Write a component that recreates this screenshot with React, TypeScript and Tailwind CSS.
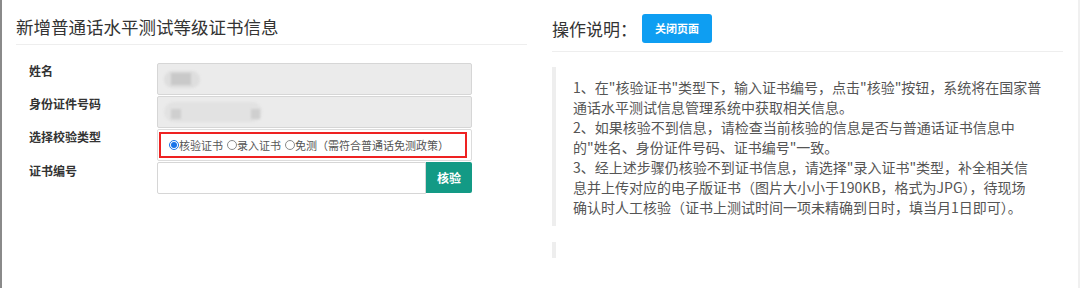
import React from "react";

const font = { fontFamily: '"Noto Sans CJK SC", "Microsoft YaHei", sans-serif' };

function Radio({ checked }: { checked?: boolean }) {
  return checked ? (
    <span className="inline-flex w-[10px] h-[10px] rounded-full border border-[#1a73e8] items-center justify-center bg-white shrink-0">
      <span className="w-[6px] h-[6px] rounded-full bg-[#1a73e8]" />
    </span>
  ) : (
    <span className="inline-block w-[10px] h-[10px] rounded-full border border-[#8a8a8a] bg-white shrink-0" />
  );
}

export default function App() {
  const lines = [
    '1、在"核验证书"类型下，输入证书编号，点击"核验"按钮，系统将在国家普',
    "通话水平测试信息管理系统中获取相关信息。",
    "2、如果核验不到信息，请检查当前核验的信息是否与普通话证书信息中",
    '的"姓名、身份证件号码、证书编号"一致。',
    '3、经上述步骤仍核验不到证书信息，请选择"录入证书"类型，补全相关信',
    "息并上传对应的电子版证书（图片大小小于190KB，格式为JPG），待现场",
    "确认时人工核验（证书上测试时间一项未精确到日时，填当月1日即可）。",
  ];
  return (
    <div
      style={font}
      className="w-[1080px] h-[288px] bg-white flex border-l-2 border-[#8a8a8a] overflow-hidden"
    >
      {/* Left column */}
      <div className="w-[525px] pl-[14px] shrink-0">
        <div className="w-[511px] pt-[14px] pb-[5px] border-b border-[#eeeeee]">
          <div className="text-[17.5px] leading-[25px] text-[#333]">新增普通话水平测试等级证书信息</div>
        </div>
        <div className="mt-[18px] pl-[13px] flex flex-col gap-[1px]">
          <div className="flex h-[32px]">
            <div className="w-[128px] text-[12px] leading-[16px] font-bold text-[#333]">姓名</div>
            <div className="w-[315px] h-[32px] bg-[#ebebeb] border border-[#d6d6d6] rounded-[2px] relative">
              <div className="absolute left-[6px] top-[7px] w-[36px] h-[17px] rounded-full bg-[#dedede] blur-[1px]" />
              <div className="absolute left-[13px] top-[9px] w-[20px] h-[12px] bg-[#c9c9c9] blur-[1px]" />
            </div>
          </div>
          <div className="flex h-[32px]">
            <div className="w-[128px] text-[12px] leading-[16px] font-bold text-[#333]">身份证件号码</div>
            <div className="w-[315px] h-[32px] bg-[#ebebeb] border border-[#d6d6d6] rounded-[2px] relative">
              <div className="absolute left-[6px] top-[5px] w-[98px] h-[20px] rounded-full bg-[#e2e2e2] blur-[1px]" />
              <div className="absolute left-[13px] top-[12px] w-[10px] h-[10px] bg-[#cfcfcf] blur-[1px]" />
              <div className="absolute left-[93px] top-[12px] w-[9px] h-[10px] bg-[#cfcfcf] blur-[1px]" />
            </div>
          </div>
          <div className="flex h-[32px]">
            <div className="w-[128px] text-[12px] leading-[16px] font-bold text-[#333]">选择校验类型</div>
            <div className="w-[315px] h-[32px] bg-white border border-[#dcdcdc] rounded-[2px] pl-[1px] pt-[2px]">
              <div className="w-[308px] h-[26px] border-2 border-[#ee2222] flex items-center pl-[8px] text-[11px] text-[#555] leading-none whitespace-nowrap">
                <Radio checked />
                <span>核验证书</span>
                <span className="w-[4px]" />
                <Radio />
                <span>录入证书</span>
                <span className="w-[4px]" />
                <Radio />
                <span>免测（需符合普通话免测政策）</span>
              </div>
            </div>
          </div>
          <div className="flex h-[32px]">
            <div className="w-[128px] text-[12px] leading-[16px] font-bold text-[#333] pt-[1px]">证书编号</div>
            <div className="w-[315px] h-[32px] flex">
              <div className="w-[269px] h-[32px] bg-white border border-[#d6d6d6] rounded-l-[2px]" />
              <div className="w-[46px] h-[31px] bg-[#139a85] rounded-r-[2px] flex items-center justify-center text-white text-[12px] font-bold">
                核验
              </div>
            </div>
          </div>
        </div>
      </div>

      {/* Right column */}
      <div className="w-[550px] pl-[25px] shrink-0">
        <div className="w-[511px] h-[52px] border-b border-[#eeeeee] pt-[14px] flex items-start">
          <div className="text-[17px] leading-[29px] text-[#333]">操作说明：</div>
          <div className="ml-[5px] w-[70px] h-[29px] bg-[#0e9ef2] rounded-[3px] flex items-center justify-center text-white text-[11px] font-bold">
            关闭页面
          </div>
        </div>
        <div className="mt-[15px] border-l-4 border-[#eeeeee] pl-[17px] pt-[10px] pb-[9px]">
          {lines.map((l, i) => (
            <div key={i} className="text-[14px] leading-[20px] text-[#555] whitespace-nowrap">
              {l}
            </div>
          ))}
        </div>
        <div className="mt-[16px] border-l-4 border-[#eeeeee] h-[16px]" />
      </div>
      <div className="flex-1" />
      <div className="w-[2px] h-full bg-[#f0f0f0]" />
    </div>
  );
}
